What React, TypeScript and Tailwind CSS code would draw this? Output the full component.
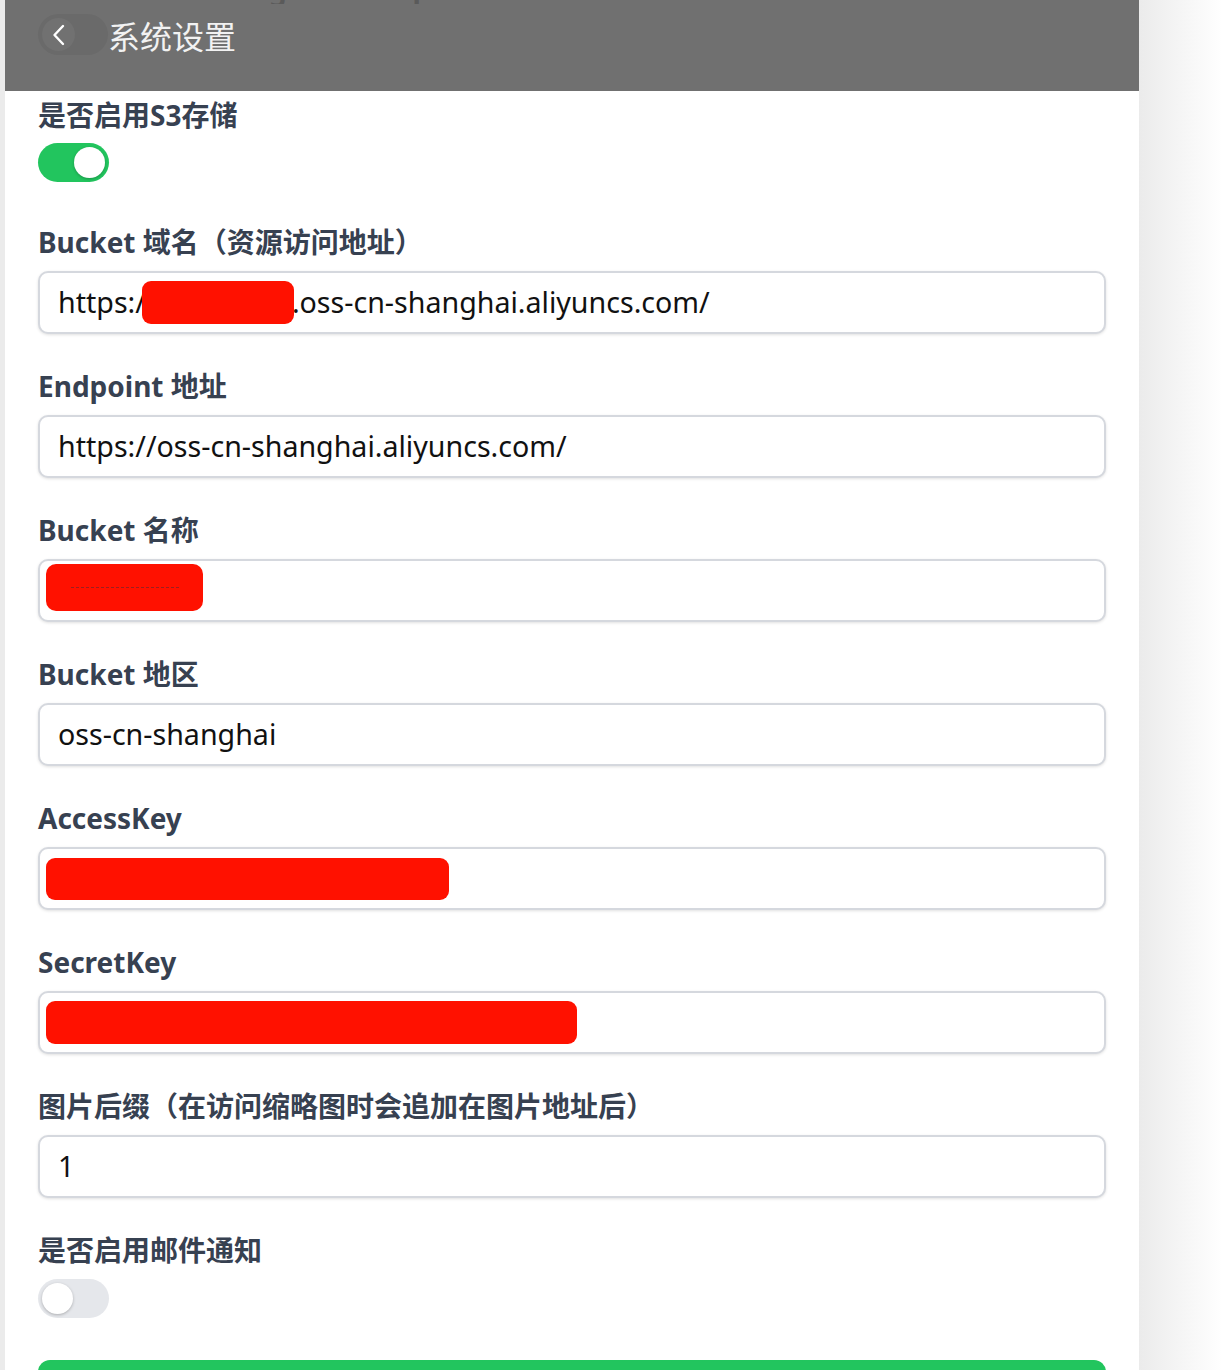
import React from "react";

const labelCls =
  "text-[28px] leading-[40px] font-bold text-[#374151] [font-family:'Noto_Sans','Noto_Sans_CJK_SC',sans-serif]";
const inputCls =
  "h-[63px] w-full rounded-[10px] border-2 border-[#d5d8de] bg-white shadow-[0_1px_3px_rgba(0,0,0,0.12)] flex items-center px-[18px] text-[28.6px] text-[#111111] [font-family:'Noto_Sans','Noto_Sans_CJK_SC',sans-serif] relative";

function Redact({ w, h = 43, className = "" }: { w: number; h?: number; className?: string }) {
  return (
    <div
      className={"bg-[#ff1100] rounded-[9px] shrink-0 " + className}
      style={{ width: w, height: h }}
    />
  );
}

function Field({ label, children }: { label: string; children: React.ReactNode }) {
  return (
    <div className="flex flex-col gap-[9px] mb-[32px]">
      <div className={labelCls}>{label}</div>
      <div className={inputCls}>{children}</div>
    </div>
  );
}

function Toggle({ on }: { on: boolean }) {
  return (
    <div
      className={
        "w-[71px] h-[39px] rounded-full flex items-center px-[4px] " +
        (on ? "bg-[#22c55e] justify-end" : "bg-[#e5e7eb] justify-start")
      }
    >
      <div className="w-[31px] h-[31px] rounded-full bg-white shadow-[0_1px_3px_rgba(0,0,0,0.25)]" />
    </div>
  );
}

export default function App() {
  return (
    <div className="w-[1222px] h-[1370px] overflow-hidden flex bg-white">
      <div className="w-[5px] bg-[#ebebeb] shrink-0" />
      <div className="w-[1134px] shrink-0 bg-white flex flex-col">
        <div className="h-[91px] bg-[#707070] flex flex-col shrink-0 overflow-hidden">
          <div className="h-[4px] overflow-hidden">
            <div className="-mt-[26px] ml-[38px] text-[28px] leading-[30px] font-bold text-[#5a5a5a] [font-family:'Noto_Sans',sans-serif] tracking-[6px] whitespace-nowrap">
              Pilot Settings Setup
            </div>
          </div>
          <div className="flex items-center ml-[33px] mt-[10px]">
            <div className="w-[70px] h-[41px] rounded-full bg-[#6a6a6a] flex items-center pl-[4px]">
              <div className="w-[33px] h-[33px] rounded-full bg-[#717171] flex items-center justify-center">
                <svg width="16" height="24" viewBox="0 0 16 24" fill="none">
                  <path d="M12 3 L3.5 12 L12 21" stroke="#ffffff" strokeWidth="2.4" strokeLinecap="round" strokeLinejoin="round" />
                </svg>
              </div>
            </div>
            <div className="ml-0 text-[32px] leading-[40px] text-[#f2f2f2] [font-family:'Noto_Sans_CJK_SC',sans-serif]">
              系统设置
            </div>
          </div>
        </div>
        <div className="px-[33px] pt-[4px] flex flex-col">
          <div className="flex flex-col gap-[8px] mb-[40px]">
            <div className={labelCls}>是否启用S3存储</div>
            <Toggle on={true} />
          </div>
          <Field label="Bucket 域名（资源访问地址）">
            <span>https:/</span>
            <Redact w={152} className="-ml-[4px] -mr-[2px]" />
            <span>.oss-cn-shanghai.aliyuncs.com/</span>
          </Field>
          <Field label="Endpoint 地址">
            <span>https://oss-cn-shanghai.aliyuncs.com/</span>
          </Field>
          <Field label="Bucket 名称">
            <div className="-ml-[12px] -mt-[6px] w-[157px] h-[47px] bg-[#ff1100] rounded-[10px] flex items-center justify-center">
              <div className="w-[108px] border-t border-dashed border-[#9a2020]" />
            </div>
          </Field>
          <Field label="Bucket 地区">
            <span>oss-cn-shanghai</span>
          </Field>
          <Field label="AccessKey">
            <Redact w={403} h={42} className="-ml-[12px]" />
          </Field>
          <Field label="SecretKey">
            <Redact w={531} h={43} className="-ml-[12px]" />
          </Field>
          <Field label="图片后缀（在访问缩略图时会追加在图片地址后）">
            <span>1</span>
          </Field>
          <div className="flex flex-col gap-[9px] mb-[42px]">
            <div className={labelCls}>是否启用邮件通知</div>
            <Toggle on={false} />
          </div>
          <div className="h-[60px] rounded-[12px] bg-[#22c55e] shrink-0" />
        </div>
      </div>
      <div className="flex-1 bg-gradient-to-r from-[#ebebeb] to-[#ffffff]" />
    </div>
  );
}
